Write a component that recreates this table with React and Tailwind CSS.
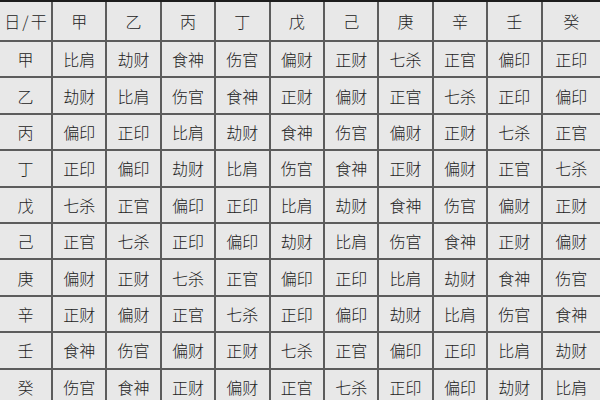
import React from 'react'

const stems = ['甲', '乙', '丙', '丁', '戊', '己', '庚', '辛', '壬', '癸']

const rows = [
    ['比肩', '劫财', '食神', '伤官', '偏财', '正财', '七杀', '正官', '偏印', '正印'],
    ['劫财', '比肩', '伤官', '食神', '正财', '偏财', '正官', '七杀', '正印', '偏印'],
    ['偏印', '正印', '比肩', '劫财', '食神', '伤官', '偏财', '正财', '七杀', '正官'],
    ['正印', '偏印', '劫财', '比肩', '伤官', '食神', '正财', '偏财', '正官', '七杀'],
    ['七杀', '正官', '偏印', '正印', '比肩', '劫财', '食神', '伤官', '偏财', '正财'],
    ['正官', '七杀', '正印', '偏印', '劫财', '比肩', '伤官', '食神', '正财', '偏财'],
    ['偏财', '正财', '七杀', '正官', '偏印', '正印', '比肩', '劫财', '食神', '伤官'],
    ['正财', '偏财', '正官', '七杀', '正印', '偏印', '劫财', '比肩', '伤官', '食神'],
    ['食神', '伤官', '偏财', '正财', '七杀', '正官', '偏印', '正印', '比肩', '劫财'],
    ['伤官', '食神', '正财', '偏财', '正官', '七杀', '正印', '偏印', '劫财', '比肩'],
]

const Cell = ({ children }) => (
    <div className="bg-[#e8e8e8] flex items-center justify-center text-[16px] font-light text-[#222]">
        {children}
    </div>
)

const App = () => {
    return (
        <div className="w-[600px] h-[400px] overflow-hidden bg-[#e8e8e8]" style={{ fontFamily: '"Noto Sans CJK SC", "Noto Sans", sans-serif' }}>
            <div className="border-t-2 border-[#1e1e1e] bg-[#5c5c5c] grid gap-[2px] grid-cols-[51px_repeat(9,52.4px)_1fr] grid-rows-[38px_repeat(10,34.4px)] pb-[2px]">
                <Cell>
                    <span className="tracking-[2px] pl-[2px]">日/干</span>
                </Cell>
                {stems.map((s) => (
                    <Cell key={s}>{s}</Cell>
                ))}
                {rows.map((row, i) => (
                    <React.Fragment key={stems[i]}>
                        <Cell>{stems[i]}</Cell>
                        {row.map((v, j) => (
                            <Cell key={j}>{v}</Cell>
                        ))}
                    </React.Fragment>
                ))}
            </div>
        </div>
    )
}

export default App
